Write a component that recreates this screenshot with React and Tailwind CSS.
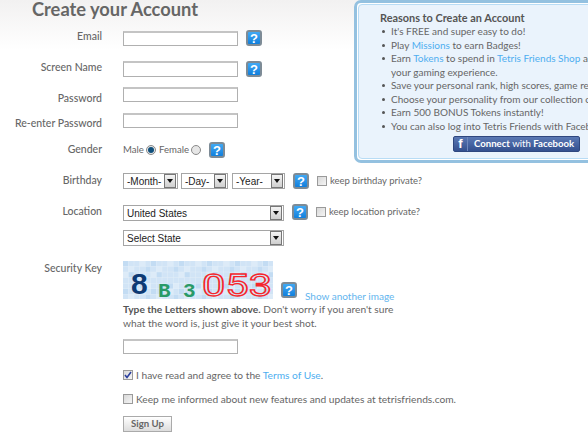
import React from 'react';

const font = { fontFamily: 'Lato, "Noto Sans", sans-serif' };

const Help = ({ className = '' }) => (
    <span className={`flex h-4 w-4 shrink-0 items-center justify-center rounded-[3px] border-2 border-[#7d8b96] bg-gradient-to-b from-[#3fa9f5] to-[#0f7fdc] text-[13px] leading-none font-bold text-white ${className}`} style={{ fontFamily: '"Liberation Sans", sans-serif' }}>
        ?
    </span>
);

const Field = ({ className = 'h-[15px]' }) => (
    <div className={`w-[115px] border border-t-2 border-[#b0b0b0] border-t-[#c4c4c4] bg-white ${className}`} />
);

const Dropdown = ({ label, width }) => (
    <div className={`flex h-[16px] items-center justify-between border border-[#a5a5a5] bg-white pl-[3px] pr-[1px] text-[10px] whitespace-nowrap text-[#222] ${width}`} style={{ fontFamily: '"Liberation Sans", sans-serif' }}>
        <span>{label}</span>
        <span className="flex h-[14px] w-[12px] items-center justify-center border border-[#777] bg-gradient-to-b from-[#f4f4f4] to-[#cfcfcf]">
            <svg width="6" height="4" viewBox="0 0 6 4"><path d="M0 0h6L3 4z" fill="#111" /></svg>
        </span>
    </div>
);

const Check = ({ checked }) => (
    <span className="flex h-[10px] w-[10px] shrink-0 items-center justify-center border border-[#9a9a9a] bg-gradient-to-br from-[#d8d8d8] to-[#f5f5f5]">
        {checked && (
            <svg width="8" height="8" viewBox="0 0 8 8"><path d="M1 4l2 2.5L7 1" fill="none" stroke="#2b3f9e" strokeWidth="1.6" /></svg>
        )}
    </span>
);

const Radio = ({ checked }) => (
    <span className="flex h-[10px] w-[10px] shrink-0 items-center justify-center rounded-full border border-[#8a8a8a] bg-[#e6e6e6]">
        {checked && <span className="h-[6px] w-[6px] rounded-full bg-[#0f4f7c]" />}
    </span>
);

const Row = ({ label, className = '', labelClass = '', children }) => (
    <div className={`flex ${className}`}>
        <div className={`w-[102px] shrink-0 text-right text-[10.5px] leading-[14px] font-medium whitespace-nowrap text-[#666] ${labelClass}`}>{label}</div>
        <div className="ml-[21px] min-w-0 flex-1">{children}</div>
    </div>
);

const Link = ({ children }) => <span className="text-[#4eaef0]">{children}</span>;

const Captcha = () => {
    const tiles = [];
    for (let y = 0; y < 7; y++) {
        for (let x = 0; x < 27; x++) {
            const n = (x * 7 + y * 13 + x * y) % 5;
            tiles.push(
                <rect key={`${x}-${y}`} x={x * 5.6} y={y * 5.6} width="5.2" height="5.2" fill={n === 0 ? '#c3dcf3' : n === 1 ? '#ddebf8' : '#d1e4f6'} />
            );
        }
    }
    return (
        <svg width="150" height="38" viewBox="0 0 150 38" className="block shrink-0">
            <rect width="150" height="38" fill="#e4eff9" />
            {tiles}
            <text x="8" y="33" fontFamily="Liberation Sans" fontSize="30" fontWeight="700" fill="#0d3a74">8</text>
            <text x="35" y="36" fontFamily="Liberation Mono" fontSize="21" fontWeight="700" fill="#2a9a68">B</text>
            <text x="60" y="36" fontFamily="Liberation Mono" fontSize="21" fontWeight="700" fill="#2a9a68">3</text>
            <text x="79" y="35" fontFamily="Roboto" fontSize="31" fill="none" stroke="#f5262c" strokeWidth="1.3" textLength="70" lengthAdjust="spacingAndGlyphs">053</text>
        </svg>
    );
};

const reasons = [
    <>It's FREE and super easy to do!</>,
    <>Play <Link>Missions</Link> to earn Badges!</>,
    <>Earn <Link>Tokens</Link> to spend in <Link>Tetris Friends Shop</Link> and customize<br />your gaming experience.</>,
    <>Save your personal rank, high scores, game replays and more</>,
    <>Choose your personality from our collection of avatars</>,
    <>Earn 500 BONUS Tokens instantly!</>,
    <>You can also log into Tetris Friends with Facebook</>,
];

export default function App() {
    return (
        <div className="relative h-[437px] w-[588px] overflow-hidden bg-gradient-to-b from-[#f2f1f1] to-white to-[50px] text-[#666]" style={font}>
            {/* reasons panel sits over the top right corner */}
            <div className="absolute top-0 left-[354px] h-[163px] w-[260px] rounded-[7px] border-[3px] border-[#94c1e0] bg-white p-[1px]">
                <div className="h-full rounded-[4px] border border-[#b8dcf5] bg-[#eaf3fc] pl-[21px] pt-[6px]">
                    <div className="text-[10.9px] leading-[14px] font-bold whitespace-nowrap text-[#555]">Reasons to Create an Account</div>
                    <ul className="text-[10px] leading-[13.5px] whitespace-nowrap text-[#666]">
                        {reasons.map((reason, i) => (
                            <li key={i} className="relative pl-[11px]">
                                <span className="absolute top-[5px] left-[2px] h-[3px] w-[3px] rounded-full bg-[#555]" />
                                {reason}
                            </li>
                        ))}
                    </ul>
                </div>
                <div className="absolute top-[133px] left-[96px] flex h-[16px] w-[127px] items-center rounded-[2px] border border-[#2f477f] bg-gradient-to-b from-[#5a78b4] to-[#34508f] text-[9.6px] whitespace-nowrap text-white">
                    <span className="w-[14px] shrink-0 border-r border-[#6f88bd] text-center text-[13px] leading-[14px] font-bold" style={{ fontFamily: '"Liberation Sans", sans-serif' }}>f</span>
                    <span className="ml-[6px]"><b>Connect</b> with <b>Facebook</b></span>
                </div>
            </div>

            <h1 className="ml-[32px] text-[18.3px] leading-[18px] font-bold text-[#666]">Create your Account</h1>

            <Row label="Email" className="mt-[13px]" labelClass="-mt-[2px]">
                <div className="flex items-start">
                    <Field />
                    <Help className="ml-[8px] -mt-[1px] -mb-[1px]" />
                </div>
            </Row>
            <Row label="Screen Name" className="mt-[15px]" labelClass="-mt-[1px]">
                <div className="flex items-start">
                    <Field className="h-[16px]" />
                    <Help className="ml-[8px]" />
                </div>
            </Row>
            <Row label="Password" className="mt-[10px]" labelClass="mt-[4px] -mb-[4px]">
                <Field />
            </Row>
            <Row label="Re-enter Password" className="mt-[11px]" labelClass="mt-[3px] -mb-[3px]">
                <Field />
            </Row>
            <Row label="Gender" className="mt-[14px]">
                <div className="flex items-center text-[9.6px]">
                    <span className="w-[23px]">Male</span>
                    <Radio checked />
                    <span className="ml-[3px] w-[32px]">Female</span>
                    <Radio />
                    <Help className="ml-[8px]" />
                </div>
            </Row>
            <Row label="Birthday" className="mt-[15px]">
                <div className="flex items-center">
                    <Dropdown label="-Month-" width="w-[55px]" />
                    <div className="ml-[3px]"><Dropdown label="-Day-" width="w-[47px]" /></div>
                    <div className="ml-[4px]"><Dropdown label="-Year-" width="w-[53px]" /></div>
                    <Help className="ml-[8px]" />
                    <span className="ml-[8px]"><Check /></span>
                    <span className="ml-[3px] text-[9.5px] whitespace-nowrap">keep birthday private?</span>
                </div>
            </Row>
            <Row label="Location" className="mt-[15px]">
                <div className="flex items-start">
                    <div className="mt-[1px]"><Dropdown label="United States" width="w-[161px]" /></div>
                    <Help className="ml-[8px]" />
                    <span className="mt-[3px] ml-[8px]"><Check /></span>
                    <span className="mt-[1px] ml-[3px] text-[9.5px] leading-[14px] whitespace-nowrap">keep location private?</span>
                </div>
                <div className="mt-[9px]">
                    <Dropdown label="Select State" width="w-[161px]" />
                </div>
            </Row>
            <Row label="Security Key" className="mt-[15px]">
                <div className="flex items-end">
                    <Captcha />
                    <Help className="ml-[8px] mb-[1px]" />
                    <span className="ml-[8px] -mb-[4px] text-[10px] leading-[14px] whitespace-nowrap text-[#63b5ee]">Show another image</span>
                </div>
                <p className="mt-[3px] w-[275px] text-[10.2px] leading-[14px]">
                    <span className="font-bold text-[#555]">Type the Letters shown above.</span> Don't worry if you aren't sure what the word is, just give it your best shot.
                </p>
                <Field className="mt-[9px] h-[15px]" />
                <div className="mt-[14px] flex items-center text-[10.2px] leading-[14px]">
                    <Check checked />
                    <span className="ml-[3px]">I have read and agree to the <Link>Terms of Use</Link>.</span>
                </div>
                <div className="mt-[10px] flex items-center text-[10.2px] leading-[14px] whitespace-nowrap">
                    <Check />
                    <span className="ml-[3px]">Keep me informed about new features and updates at tetrisfriends.com.</span>
                </div>
                <div className="mt-[10px] flex h-[16px] w-[49px] items-center justify-center border border-[#aaa] bg-gradient-to-b from-white to-[#dcdcdc] text-[9.6px] font-bold text-[#666]">Sign Up</div>
            </Row>
        </div>
    );
}
